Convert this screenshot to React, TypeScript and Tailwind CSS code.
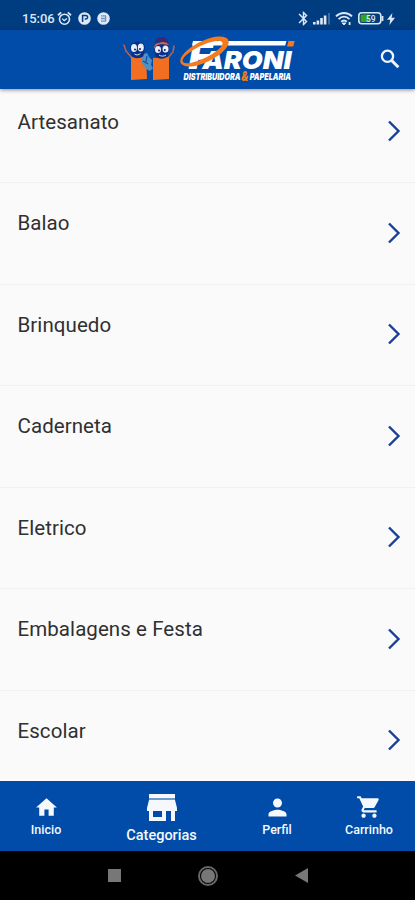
import { MdBluetooth, MdHome, MdPerson, MdShoppingCart } from 'react-icons/md';

const categories = [
  'Artesanato',
  'Balao',
  'Brinquedo',
  'Caderneta',
  'Eletrico',
  'Embalagens e Festa',
  'Escolar',
];

const StatusBar = () => (
  <div className="h-[30px] shrink-0 bg-[#003c80] text-[#dce8f8] flex items-center justify-between pl-[22px] pr-[20px] pt-[7px]">
    <div className="flex items-center">
      <span className="w-[33px] text-[13px] leading-none font-medium tracking-[-0.1px]">15:06</span>
      <svg className="w-[15px] h-[15px] ml-[2px]" viewBox="0 0 15 15" fill="none" stroke="currentColor">
        <circle cx="7.5" cy="8.2" r="5" strokeWidth="1.6" />
        <path d="M1 4.2 4.2 1.4M14 4.2 10.8 1.4" strokeWidth="1.8" />
        <path d="m5.2 7.6 2 2 2.8-2.2" strokeWidth="1.3" />
      </svg>
      <svg className="w-[13px] h-[13px] ml-[6px]" viewBox="0 0 13 13">
        <circle cx="6.5" cy="6.5" r="6.3" fill="currentColor" />
        <path d="M4.6 10V3.5h3.2a1.7 1.7 0 0 1 0 3.6H6.8" fill="none" stroke="#003c80" strokeWidth="1.5" />
      </svg>
      <svg className="w-[13px] h-[13px] ml-[6px]" viewBox="0 0 13 13">
        <circle cx="6.5" cy="6.5" r="6.3" fill="currentColor" />
        <path d="M4 3.8h5M4 6.5h5M4 9.2h5M8.6 3.8v5.4" fill="none" stroke="#7593b8" strokeWidth="1.3" />
      </svg>
    </div>

    <div className="flex items-center">
      <MdBluetooth className="w-[17px] h-[17px]" />
      <svg className="w-[18px] h-[13px] ml-[1px]" viewBox="0 0 18 13" fill="currentColor">
        <path d="M0 10h2.6v2.5H0zM3.6 8.5h2.6v4H3.6zM7.2 6h2.6v6.5H7.2zM10.8 3.5h2.6v9h-2.6z" />
        <path d="M15.2 1h1.6v11.5h-1.6z" opacity="0.35" />
      </svg>
      <svg className="w-[18px] h-[15px] ml-[4px]" viewBox="0 0 18 15" fill="none" stroke="currentColor">
        <path d="M1 5.4c4.6-4.6 11.4-4.6 16 0M3.6 8.2c3.2-3.2 7.6-3.2 10.8 0M6.2 10.8c1.7-1.6 3.9-1.6 5.6 0" strokeWidth="1.9" />
        <path d="m7.2 12 1.8 2 1.8-2z" fill="currentColor" />
        <path d="M14.6 11v3" strokeWidth="1.8" />
      </svg>
      <svg className="w-[26px] h-[13px] ml-[5px]" viewBox="0 0 26 13">
        <rect x="0.8" y="0.8" width="22" height="11" rx="3" fill="none" stroke="currentColor" strokeWidth="1.6" />
        <path d="M24.5 4v5" stroke="currentColor" strokeWidth="1.8" />
        <rect x="2.6" y="2.6" width="9" height="7.4" rx="1" fill="#36a51e" />
        <text x="8" y="9.6" fill="currentColor" fontSize="8.5" fontWeight="500">
          59
        </text>
      </svg>
      <svg className="w-[8px] h-[12px] ml-[3px]" viewBox="0 0 8 12" fill="currentColor">
        <path d="M5.4 0 0 6.8h3.2L2.4 12 8 4.8H4.6z" />
      </svg>
    </div>
  </div>
);

const Mascots = () => (
  <g>
    {/* left bag */}
    <path d="m124 45 2 6 6 7" fill="none" stroke="#b5604f" strokeWidth="1.6" strokeLinecap="round" />
    <path d="m131 57 15-1 1 23-16 1z" fill="#f26f22" />
    <path d="M130 48c-1-7 13-9 15-2l-1 10c-4 3-10 3-12 0z" fill="#0a2f86" />
    <ellipse cx="134" cy="48" rx="3" ry="4" fill="#e6effb" />
    <ellipse cx="140.8" cy="47.5" rx="3" ry="4" fill="#e6effb" />
    <circle cx="135" cy="49.5" r="1" fill="#14224f" />
    <circle cx="140" cy="49" r="1" fill="#14224f" />
    <path d="M134.5 54c2 1.5 4 1 6-.5" fill="none" stroke="#e6effb" strokeWidth="0.9" />
    {/* right bag */}
    <path d="m168 58 5-6 1-6" fill="none" stroke="#b5604f" strokeWidth="1.6" strokeLinecap="round" />
    <path d="m153 58 16-1v22l-16 1z" fill="#f26f22" />
    <path d="M154 48c0-5 14-6 15-1l-1 9c-4 4-10 3-13 0z" fill="#0a2f86" />
    <ellipse cx="158" cy="49.5" rx="3" ry="3.6" fill="#e6effb" />
    <ellipse cx="165.5" cy="49" rx="3" ry="3.6" fill="#e6effb" />
    <circle cx="159" cy="50.5" r="1" fill="#14224f" />
    <circle cx="164.8" cy="50" r="1" fill="#14224f" />
    <path d="M155 43c0-4 3-6 7-6s6 3 7 7c-5-2-9-2-14-1z" fill="#372878" />
    <path d="M154 49c0-4 2-6 5-6 4-2 8-1 10 2-6-1-11-1-13 1z" fill="#d7623c" />
    <path d="M159 55c2 1.5 5 1.5 7 0" fill="none" stroke="#e6effb" strokeWidth="0.9" />
    {/* clasped hands */}
    <path d="m144 54 3-1 2 4 3 3-1 5 2 3-3 3-4-2-2-3-3-4z" fill="#4f91c7" />
    <path d="m143 61 5 3M147 56l-1 6" stroke="#1c4f9d" strokeWidth="1.2" />
  </g>
);

const Logo = () => (
  <svg
    className="w-[180px] h-[54px] overflow-visible"
    viewBox="120 32 180 54"
    fontFamily="Inter, sans-serif"
    fontStyle="italic"
    fontWeight="900"
  >
    <Mascots />
    <path d="M193 41h93.5l-1.3 4.5H192z" fill="#fff" />
    <text x="188.5" y="68.5" fontSize="25" fill="#fff" textLength="103" lengthAdjust="spacingAndGlyphs">
      <tspan fontSize="37">F</tspan>
      <tspan dx="-9">ARONI</tspan>
    </text>
    <path d="M288.5 41h6.2l-1.5 5.5H287z" fill="#f47a20" />
    {/* orbit ring around the initial */}
    <path
      d="M-26.5 0a26.5 10.5 0 1 0 53 0a26.5 10.5 0 1 0-53 0zM-24 -.3a22 6.4 0 1 1 44 0a22 6.4 0 1 1-44 0z"
      fill="#f47a20"
      fillRule="evenodd"
      transform="translate(204.5 51.5) rotate(-26)"
    />
    <text x="183.5" y="80" fontSize="9.3" fill="#fff" textLength="107.5" lengthAdjust="spacingAndGlyphs">
      DISTRIBUIDORA
      <tspan dx="1" dy="0.8" fontSize="13" fill="#f47a20">
        &amp;
      </tspan>
      <tspan dx="2" dy="-0.8">
        PAPELARIA
      </tspan>
    </text>
  </svg>
);

const Header = () => (
  <header className="relative z-10 h-[58.5px] shrink-0 bg-[#004ca8] flex items-start justify-between pl-[120px] pr-[15px] pt-[2px] shadow-[0_1px_4px_rgba(0,0,0,0.45)]">
    <Logo />
    <button className="mt-[17px]">
      <svg className="w-[20px] h-[20px]" viewBox="0 0 20 20" fill="none" stroke="#f0f5fc">
        <circle cx="7.5" cy="7.3" r="5.6" strokeWidth="2.3" />
        <path d="m11.8 11.6 6.6 6.6" strokeWidth="2.9" />
      </svg>
    </button>
  </header>
);

const CategoryRow = ({ name }: { name: string }) => (
  <li className="h-[101.5px] shrink-0 border-b border-[#f1f1f1] flex items-start justify-between pl-[17.5px] pr-[14px]">
    <span className="mt-[26px] text-[20.5px] leading-7 text-[#303030] tracking-[0.07px]">{name}</span>
    <svg className="mt-[38.5px] w-[14px] h-[22px]" viewBox="0 0 14 22" fill="none" stroke="#173f9b" strokeWidth="2.4">
      <path d="m2 1.5 9.5 9.5L2 20.5" />
    </svg>
  </li>
);

const BottomTabs = () => (
  <nav className="h-[70px] shrink-0 bg-[#004ca8] text-[#f5f8fd] flex">
    <button className="w-[92px] flex flex-col items-center pt-[14px]">
      <MdHome className="w-[25px] h-[25px]" />
      <span className="mt-[2px] text-[12.5px] leading-4 font-medium">Inicio</span>
    </button>
    <button className="w-[139px] flex flex-col items-center pt-[13px]">
      <svg className="w-[30px] h-[27px]" viewBox="0 0 30 27" fill="currentColor">
        <path d="M2 0h26v4H2z" />
        <path d="M2 4h26v2H2z" opacity="0.45" />
        <path d="M2 6h26l2 8v3h-2v10h-4V17h-5v10H2V17H0v-3zM6 17v6h9v-6z" fillRule="evenodd" />
      </svg>
      <span className="mt-[7px] text-[14.5px] leading-4 font-medium">Categorias</span>
    </button>
    <button className="w-[92px] flex flex-col items-center pt-[13px]">
      <MdPerson className="w-[27px] h-[27px]" />
      <span className="mt-[1px] text-[12.5px] leading-4 font-medium">Perfil</span>
    </button>
    <button className="w-[92px] flex flex-col items-center pt-[13px]">
      <MdShoppingCart className="w-[26px] h-[26px]" />
      <span className="mt-[2px] text-[12.5px] leading-4 font-medium">Carrinho</span>
    </button>
  </nav>
);

const SystemNav = () => (
  <div className="h-[49px] shrink-0 bg-black flex items-center justify-center gap-[77px]">
    <div className="w-[13px] h-[13px] bg-[#777]" />
    <div className="w-[20px] h-[20px] rounded-full border-2 border-[#686868] p-[1px]">
      <div className="w-full h-full rounded-full bg-[#777]" />
    </div>
    <svg className="w-[13px] h-[15px]" viewBox="0 0 13 15">
      <path d="M13 0v15L0 7.5z" fill="#777" />
    </svg>
  </div>
);

const App = () => {
  return (
    <div className="w-full h-screen flex flex-col overflow-hidden bg-[#fafafa] font-['Roboto',sans-serif]">
      <StatusBar />
      <Header />
      <main className="flex-1 min-h-0 overflow-hidden">
        <ul className="-mt-[7px] flex flex-col">
          {categories.map((name) => (
            <CategoryRow key={name} name={name} />
          ))}
        </ul>
      </main>
      <BottomTabs />
      <SystemNav />
    </div>
  );
};

export default App;
